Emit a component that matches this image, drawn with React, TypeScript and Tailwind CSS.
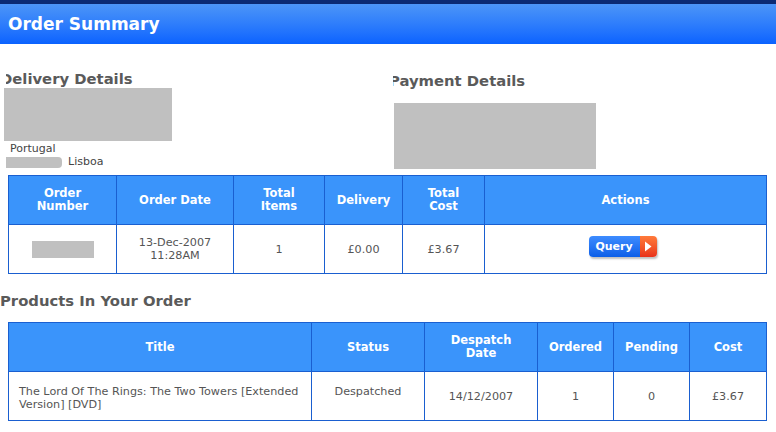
import React from "react";

const font = { fontFamily: '"DejaVu Sans", Verdana, sans-serif' };

function QueryButton() {
  return (
    <div className="inline-flex h-[21px] rounded-[4px] overflow-hidden shadow-[1px_2px_2px_rgba(0,0,0,0.25)] align-middle">
      <div className="flex items-center bg-gradient-to-b from-[#3d8cff] to-[#0a5ee8] text-white font-bold text-[11px] w-[51px] justify-center">
        Query
      </div>
      <div className="flex items-center justify-center w-[17px] bg-gradient-to-b from-[#ff7a3a] to-[#e8301a]">
        <svg width="8" height="11" viewBox="0 0 8 11">
          <path d="M1 0.5 L7.5 5.5 L1 10.5 Z" fill="white" />
        </svg>
      </div>
    </div>
  );
}

export default function App() {
  const th = "bg-[#3a94fb] text-white font-bold text-[11.5px] leading-[13px] border border-[#1a5fd0] text-center align-middle px-1";
  const td = "bg-white text-[#555] text-[11.2px] leading-[13px] border border-[#1a5fd0] text-center align-middle px-1";
  return (
    <div className="w-[776px] h-[432px] bg-white overflow-hidden" style={font}>
      <div className="h-[4px] bg-[#0b2a73]" />
      <div className="h-[40px] bg-gradient-to-b from-[#4c95f7] to-[#0a62ff] flex items-center pl-[8px]">
        <span className="text-white font-bold text-[17px] pt-[2px]">Order Summary</span>
      </div>

      <div className="flex">
        <div className="w-[389px] flex flex-col">
          <div className="ml-[6px] overflow-hidden mt-[26px] h-[18px]">
            <div className="-ml-[6px] text-[14.8px] leading-[18px] font-bold text-[#5a5a5a]">Delivery Details</div>
          </div>
          <div className="ml-[4px] w-[168px] h-[53px] bg-[#c0c0c0]" />
          <div className="ml-[10px] mt-[2px] text-[11px] leading-[12px] text-[#444]">Portugal</div>
          <div className="flex items-center mt-[1px] ml-[6px]">
            <div className="w-[56px] h-[11px] bg-[#c0c0c0] rounded-r-[4px]" />
            <span className="ml-[6px] text-[11px] leading-[12px] text-[#444]">Lisboa</span>
          </div>
        </div>
        <div className="flex flex-col">
          <div className="ml-[4px] overflow-hidden mt-[28px] h-[18px]">
            <div className="-ml-[4px] text-[14.8px] leading-[18px] font-bold text-[#5a5a5a]">Payment Details</div>
          </div>
          <div className="ml-[5px] mt-[13px] w-[202px] h-[66px] bg-[#c0c0c0]" />
        </div>
      </div>

      <table className="ml-[8px] mt-[6px] border-collapse table-fixed w-[758px]">
        <colgroup>
          <col className="w-[108px]" />
          <col className="w-[117px]" />
          <col className="w-[91px]" />
          <col className="w-[78px]" />
          <col className="w-[82px]" />
          <col className="w-[282px]" />
        </colgroup>
        <thead>
          <tr className="h-[49px]">
            <th className={th}>Order<br />Number</th>
            <th className={th}>Order Date</th>
            <th className={th}>Total<br />Items</th>
            <th className={th}>Delivery</th>
            <th className={th}>Total<br />Cost</th>
            <th className={th}>Actions</th>
          </tr>
        </thead>
        <tbody>
          <tr className="h-[49px]">
            <td className={td}>
              <div className="mx-auto w-[62px] h-[17px] bg-[#c0c0c0]" />
            </td>
            <td className={td}>13-Dec-2007<br />11:28AM</td>
            <td className={td}>1</td>
            <td className={td}>£0.00</td>
            <td className={td}>£3.67</td>
            <td className={td}>
              <div className="-mt-[6px] pr-[6px]"><QueryButton /></div>
            </td>
          </tr>
        </tbody>
      </table>

      <div className="mt-[18px] text-[14.8px] leading-[18px] font-bold text-[#5a5a5a]">Products In Your Order</div>

      <table className="ml-[8px] mt-[12px] border-collapse table-fixed w-[758px]">
        <colgroup>
          <col className="w-[303px]" />
          <col className="w-[113px]" />
          <col className="w-[113px]" />
          <col className="w-[76px]" />
          <col className="w-[76px]" />
          <col className="w-[77px]" />
        </colgroup>
        <thead>
          <tr className="h-[49px]">
            <th className={th}>Title</th>
            <th className={th}>Status</th>
            <th className={th}>Despatch<br />Date</th>
            <th className={th}>Ordered</th>
            <th className={th}>Pending</th>
            <th className={th}>Cost</th>
          </tr>
        </thead>
        <tbody>
          <tr className="h-[49px]">
            <td className={td + " !text-left !align-top pt-[13px] !px-[10px]"}>
              The Lord Of The Rings: The Two Towers [Extended Version] [DVD]
            </td>
            <td className={td + " !align-top pt-[13px]"}>Despatched</td>
            <td className={td}>14/12/2007</td>
            <td className={td}>1</td>
            <td className={td}>0</td>
            <td className={td}>£3.67</td>
          </tr>
        </tbody>
      </table>
    </div>
  );
}
